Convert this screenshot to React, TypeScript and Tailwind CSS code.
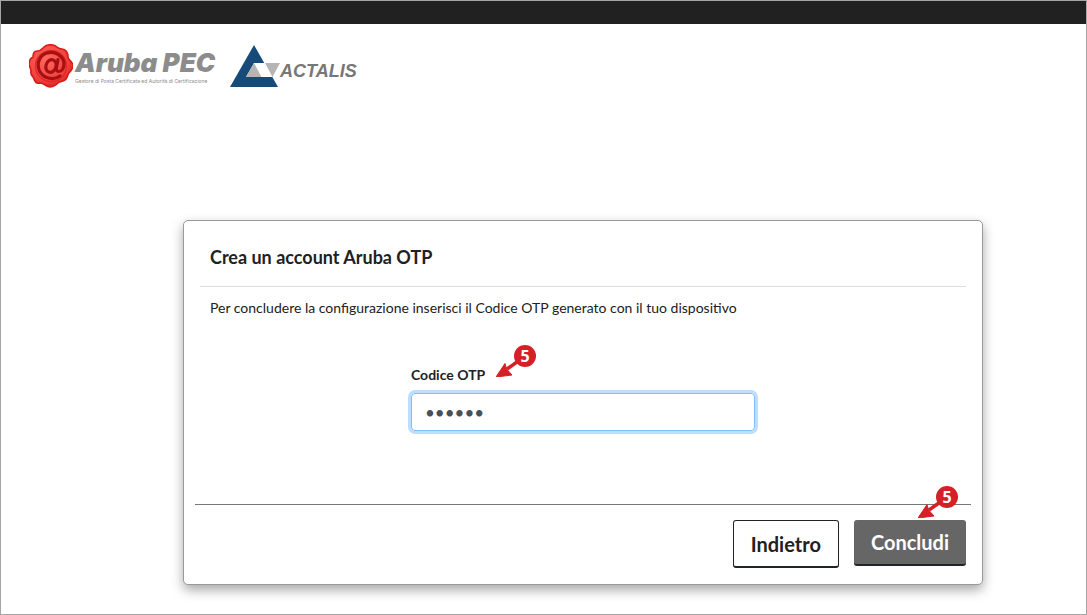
import { useState } from "react";

function ArubaSeal() {
  return (
    <svg viewBox="0 0 44 44" className="h-11 w-11 shrink-0" aria-hidden="true">
      <defs>
        <radialGradient id="wax" cx="40%" cy="35%" r="70%">
          <stop offset="0%" stopColor="#ff6a60" />
          <stop offset="70%" stopColor="#f0413c" />
          <stop offset="100%" stopColor="#d92222" />
        </radialGradient>
      </defs>
      <path
        d="M15 3c3-3 10-3 13 0 2 2 3 2 5 2 4 0 6 4 6 8 0 3 4 4 5 8 0 4-2 6-4 8-2 2-1 5-4 7-2 2-5 1-7 3-3 3-7 5-11 3-2-1-4-3-7-3-3 1-5-1-6-4-1-3-4-4-3-8 0-3-2-4-2-7 0-4 2-6 4-7 0-3 1-6 4-6 4 0 5-2 7-4z"
        fill="url(#wax)"
        stroke="#d81a1a"
        strokeWidth="1.6"
      />
      <circle cx="22" cy="22" r="15.5" fill="none" stroke="#e02a28" strokeWidth="1.5" />
      <g fill="none" stroke="#a80f12" strokeWidth="3.2" strokeLinecap="round">
        <path d="M31 32C24 37 14 34 10.500 27 7 19 11 11 18 9 26 6.500 35 12 35 20c0 4-2 7.500-5 7.500-2.500 0-3-2-2.500-4L29 15.500" />
        <ellipse cx="22" cy="22" rx="5" ry="6.500" transform="rotate(20 22 22)" />
      </g>
    </svg>
  );
}

function ActalisMark() {
  return (
    <svg viewBox="0 0 50 42" className="h-[42px] w-[50px] shrink-0" aria-hidden="true">
      <path d="M24 0 48 42H0z" fill="#164a78" />
      <path d="M24 18h26l-8 14H16z" fill="#fff" />
      <path d="M24 18 31.500 32H16z" fill="#b5b5b5" />
      <path d="M35 18h15l-7.500 14z" fill="#b5b5b5" />
    </svg>
  );
}

function StepMarker({ className }: { className: string }) {
  return (
    <span className={`pointer-events-none absolute block h-8 w-10 ${className}`}>
      <svg viewBox="0 0 40 32" className="h-8 w-10" aria-hidden="true">
        <path d="M28 12 11 24" stroke="#d42027" strokeWidth="3.500" />
        <path d="M0 32 9 18.500 10.500 24 16 30z" fill="#d42027" stroke="#d42027" strokeLinejoin="round" />
        <circle cx="29" cy="11" r="11" fill="#d42027" />
      </svg>
      <span className="absolute top-0 right-0 flex h-[22px] w-[22px] items-center justify-center font-['Open_Sans',sans-serif] text-base font-bold text-white">
        5
      </span>
    </span>
  );
}

export default function App() {
  const [code, setCode] = useState("123456");

  return (
    <div className="min-h-screen border border-[#a6a6a6] bg-white font-[Lato,sans-serif] text-[#212121]">
      <div className="h-[23px] bg-[#212121]" />

      <header className="flex items-start gap-3 px-7 pt-5">
        <div className="flex w-[189px] items-start gap-0.5">
          <ArubaSeal />
          <div className="pt-1 font-[Inter,sans-serif] whitespace-nowrap text-[#8c8c8c]">
            <div className="text-[26px] leading-[30px] font-black italic">Aruba PEC</div>
            <div className="text-[5px] leading-[6px]">
              Gestore di Posta Certificata ed Autorità di Certificazione
            </div>
          </div>
        </div>
        <div className="flex items-start pt-px">
          <ActalisMark />
          <span className="pt-4 font-['Liberation_Sans',sans-serif] text-lg leading-5 font-bold text-[#777] italic">
            ACTALIS
          </span>
        </div>
      </header>

      <main className="mt-[132px] mr-[103px] mb-[29px] ml-[182px]">
        <form
          onSubmit={(e) => e.preventDefault()}
          className="rounded-[5px] border border-[#999] bg-white pb-4 shadow-[0_5px_12px_rgba(0,0,0,0.35)]"
        >
          <h1 className="mx-4 border-b border-[#dedede] px-[10px] pt-6 pb-[17px] text-lg leading-6 font-bold">
            Crea un account Aruba OTP
          </h1>
          <p className="px-[26px] pt-[11px] text-sm leading-5">
            Per concludere la configurazione inserisci il Codice OTP generato con il tuo dispositivo
          </p>

          <div className="mx-auto w-[344px] pt-[47px] pb-[73px]">
            <div className="relative">
              <label htmlFor="otp" className="block pb-2 text-sm leading-5 font-bold">
                Codice OTP
              </label>
              <StepMarker className="-top-5 left-[85px]" />
            </div>
            <input
              id="otp"
              type="password"
              value={code}
              onChange={(e) => setCode(e.target.value)}
              className="block h-[38px] w-full rounded border border-[#80bdff] px-[13px] text-[17px] text-[#495057] shadow-[0_0_0_3px_#bfdeff] outline-none"
            />
          </div>

          <div className="relative mx-[11px] flex items-start justify-end gap-[15px] border-t border-[#777] px-[5px] pt-[15px]">
            <button
              type="button"
              className="h-12 rounded-[3px] border border-b-2 border-[#212529] bg-white px-[17px] text-xl leading-7 font-bold"
            >
              Indietro
            </button>
            <button
              type="submit"
              className="h-[46px] rounded-[3px] border-b-2 border-[#212529] bg-[#666] px-[17px] text-xl leading-7 font-bold text-white"
            >
              Concludi
            </button>
            <StepMarker className="-top-[19px] right-[13px]" />
          </div>
        </form>
      </main>
    </div>
  );
}
